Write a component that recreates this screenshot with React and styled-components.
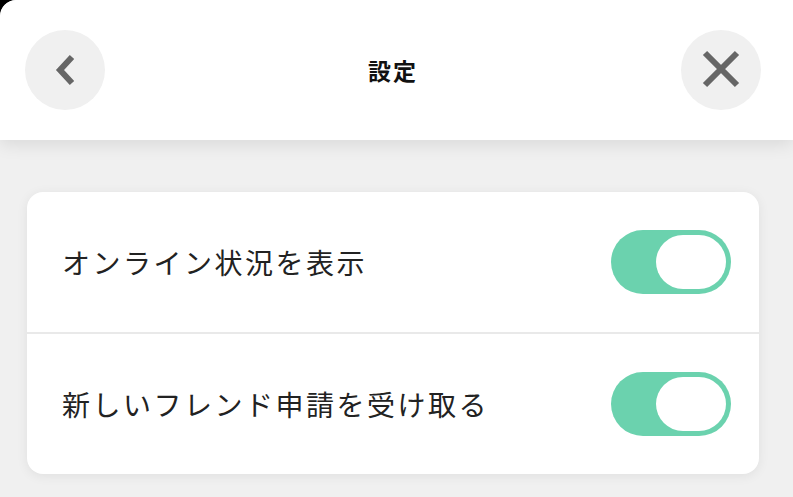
import React, { useState } from "react";
import styled, { createGlobalStyle } from "styled-components";

const GlobalStyle = createGlobalStyle`
  html, body {
    margin: 0;
    padding: 0;
    background: #000;
  }
  body {
    font-family: "Noto Sans CJK JP", "Noto Sans", sans-serif;
  }
`;

const Screen = styled.div`
  width: 793px;
  height: 497px;
  background: #f0f0f0;
  border-top-left-radius: 16px;
  overflow: hidden;
  display: flex;
  flex-direction: column;
`;

const Header = styled.header`
  height: 140px;
  flex-shrink: 0;
  background: #fff;
  border-top-left-radius: 16px;
  display: flex;
  align-items: center;
  justify-content: space-between;
  padding: 0 32px 0 25px;
  box-shadow: 0 4px 18px rgba(0, 0, 0, 0.1);
  position: relative;
  z-index: 1;
`;

const Title = styled.h1`
  margin: 0;
  font-size: 23px;
  font-weight: 700;
  letter-spacing: 2px;
  color: #111;
`;

const RoundButton = styled.button`
  width: 80px;
  height: 80px;
  border: none;
  border-radius: 50%;
  background: #f0f0f0;
  padding: 0;
  display: flex;
  align-items: center;
  justify-content: center;
  cursor: pointer;

  svg {
    display: block;
  }
`;

const Content = styled.main`
  padding: 52px 34px 0 27px;
`;

const Card = styled.section`
  background: #fff;
  border-radius: 16px;
  box-shadow: 0 2px 12px rgba(0, 0, 0, 0.07);
  overflow: hidden;
`;

const Row = styled.div`
  height: 140px;
  display: flex;
  align-items: center;
  justify-content: space-between;
  padding: 0 28px 0 35px;
  border-top: ${(p) => (p.$first ? "none" : "2px solid #e9e9e9")};
`;

const Label = styled.span`
  font-size: 28px;
  letter-spacing: 2.5px;
  color: #222;
`;

const Toggle = styled.button`
  width: 120px;
  height: 64px;
  border: none;
  border-radius: 32px;
  padding: 5px;
  background: ${(p) => (p.$on ? "#6bd2ae" : "#d8d8d8")};
  display: flex;
  justify-content: ${(p) => (p.$on ? "flex-end" : "flex-start")};
  cursor: pointer;
`;

const Knob = styled.span`
  width: 70px;
  height: 54px;
  border-radius: 27px;
  background: #fff;
`;

const settings = [
  { key: "online", label: "オンライン状況を表示" },
  { key: "friend", label: "新しいフレンド申請を受け取る" },
];

export default function App() {
  const [values, setValues] = useState({ online: true, friend: true });

  return (
    <>
      <GlobalStyle />
      <Screen>
        <Header>
          <RoundButton aria-label="戻る">
            <svg width="80" height="80" viewBox="0 0 80 80">
              <polyline
                points="47,27 35,40 47,53"
                fill="none"
                stroke="#666"
                strokeWidth="6"
              />
            </svg>
          </RoundButton>
          <Title>設定</Title>
          <RoundButton aria-label="閉じる">
            <svg width="80" height="80" viewBox="0 0 80 80">
              <path
                d="M24 23 L56 55 M56 23 L24 55"
                stroke="#666"
                strokeWidth="6"
              />
            </svg>
          </RoundButton>
        </Header>
        <Content>
          <Card>
            {settings.map((s, i) => (
              <Row key={s.key} $first={i === 0}>
                <Label>{s.label}</Label>
                <Toggle
                  $on={values[s.key]}
                  onClick={() =>
                    setValues((v) => ({ ...v, [s.key]: !v[s.key] }))
                  }
                >
                  <Knob />
                </Toggle>
              </Row>
            ))}
          </Card>
        </Content>
      </Screen>
    </>
  );
}
